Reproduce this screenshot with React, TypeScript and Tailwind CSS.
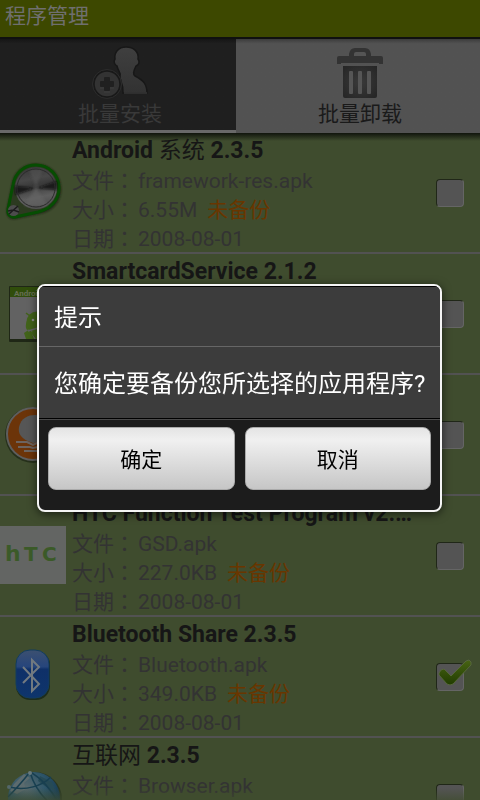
import { useState } from "react";
import type { ReactNode } from "react";

type AppItem = {
  id: string;
  name: string;
  version: string;
  cjk?: string;
  file: string;
  size: string;
  date: string;
  icon: ReactNode;
};

const SystemIcon = () => (
  <svg viewBox="0 0 66 66" className="size-full">
    <defs>
      <linearGradient id="metal" x1="0" y1="0" x2="0.2" y2="1">
        <stop offset="0" stopColor="#333333" />
        <stop offset="0.35" stopColor="#484848" />
        <stop offset="0.5" stopColor="#3a3a3a" />
        <stop offset="0.8" stopColor="#5e5e5e" />
        <stop offset="1" stopColor="#505050" />
      </linearGradient>
      <filter id="soft" x="-20%" y="-20%" width="140%" height="140%">
        <feGaussianBlur stdDeviation="1.2" />
      </filter>
    </defs>
    <path
      d="M12 26C14 12 24 5 36 5C50 5 61 16 61 30C61 44 51 53 38 55L15 60C9 61 6 55 7 50Z"
      fill="#1b2412"
      filter="url(#soft)"
    />
    <path
      d="M13 26C15 13 25 6 36 6C49 6 59 16 59 29C59 42 50 50 38 53L15 58C10 59 7 55 8 50Z"
      fill="#2c3a20"
      stroke="#064d02"
      strokeWidth="3"
    />
    <circle cx="36" cy="29" r="21" fill="url(#metal)" />
    <g filter="url(#soft)">
      <path d="M36 29L29 10H43Z" fill="#555555" opacity="0.5" />
      <path d="M36 29L24 47H48Z" fill="#666666" opacity="0.6" />
      <path d="M36 29L15 27V36Z" fill="#0d0d0d" opacity="0.8" />
      <path d="M36 29L57 22V31Z" fill="#0d0d0d" opacity="0.8" />
    </g>
    <circle cx="36" cy="29" r="19" fill="none" stroke="#2a2a2a" />
    <circle cx="13.500" cy="51.500" r="5.500" fill="#4c4c4c" />
    <path d="M8 52L13.500 51L18 47M9 55L13.500 51L19 53" stroke="#1c1c1c" strokeWidth="1.500" fill="none" />
  </svg>
);

const PackageIcon = () => (
  <svg viewBox="0 0 66 66" className="size-full">
    <rect x="9" y="6" width="51" height="56" rx="1" fill="#1f2716" />
    <rect x="10" y="7" width="48" height="52" fill="#626262" />
    <rect x="10" y="7" width="48" height="10" fill="#304d0b" />
    <text x="14" y="16" fontSize="8" fontWeight="bold" fontFamily="Roboto, sans-serif" fill="#666f55">
      Android
    </text>
    <g fill="#42631a">
      <path d="M26 48A12 12 0 0 1 50 44L27 50Z" />
      <circle cx="37" cy="42" r="10.500" />
      <path d="M24 53L30 49L34 59H26Z" />
      <path d="M30 52L48 47L52 59H36Z" />
    </g>
    <path d="M26 33L30 36" stroke="#42631a" strokeWidth="1.500" />
    <circle cx="33" cy="40" r="1.300" fill="#888888" />
    <path d="M28 51L48 45" stroke="#626262" strokeWidth="1.500" />
  </svg>
);

const BalloonIcon = () => (
  <svg viewBox="0 0 66 66" className="size-full">
    <circle cx="33" cy="34" r="28" fill="#26301b" />
    <circle cx="33" cy="33" r="26" fill="#6c3409" stroke="#5e5e5e" strokeWidth="2" />
    <path d="M33 42C20 38 18 32 19 26C21 17 28 14 35 14C44 14 49 20 49 27C49 35 42 40 34 42Z" fill="#565656" />
    <path
      d="M16 41H27L33 44L39 41H50M18 46H30L33 47L38 46H48M24 50H42"
      fill="none"
      stroke="#6c6460"
      strokeWidth="2"
    />
  </svg>
);

const HtcIcon = () => (
  <svg viewBox="0 0 66 66" className="size-full">
    <rect x="0" y="4" width="66" height="58" fill="#636563" />
    <g fontFamily="'DejaVu Sans', sans-serif" fontWeight="bold" fill="#3b5a28">
      <text x="5" y="39" fontSize="22">h</text>
      <text x="24" y="39" fontSize="20">T</text>
      <text x="42" y="39" fontSize="20">C</text>
    </g>
  </svg>
);

const BluetoothIcon = () => (
  <svg viewBox="0 0 66 66" className="size-full">
    <defs>
      <linearGradient id="bt" x1="0" y1="0" x2="0" y2="1">
        <stop offset="0" stopColor="#3c5070" />
        <stop offset="0.35" stopColor="#26457c" />
        <stop offset="0.4" stopColor="#0f3068" />
        <stop offset="1" stopColor="#0e356c" />
      </linearGradient>
    </defs>
    <rect x="16" y="8" width="34" height="49" rx="14" fill="#1e2d1d" />
    <rect x="16" y="7" width="33" height="48" rx="14" fill="url(#bt)" stroke="#123d5f" />
    <path d="M23 24L39 41L32 48V17L39 24L23 40" fill="none" stroke="#727a80" strokeWidth="2" />
  </svg>
);

const GlobeIcon = () => (
  <svg viewBox="0 0 66 66" className="size-full">
    <defs>
      <radialGradient id="globe" cx="0.35" cy="0.3" r="0.7">
        <stop offset="0" stopColor="#59696c" />
        <stop offset="0.5" stopColor="#30576a" />
        <stop offset="1" stopColor="#143851" />
      </radialGradient>
    </defs>
    <circle cx="35" cy="35" r="27" fill="#2b3822" />
    <circle cx="34" cy="34" r="26" fill="url(#globe)" />
    <path d="M14 20L24 10L30 14L24 19L26 25L17 30L10 27Z" fill="#5c6b6e" />
    <path d="M40 12L52 18L55 27L45 22L38 17Z" fill="#264a55" />
    <path
      d="M30 8C22 18 15 26 8 33M30 8C40 13 52 26 59 40M9 23C26 27 42 22 51 13M30 8C34 22 42 34 56 44"
      fill="none"
      stroke="#183f50"
      strokeWidth="1.500"
    />
    <circle cx="30" cy="9" r="2" fill="#68797c" />
    <circle cx="9" cy="23" r="2" fill="#53676a" />
  </svg>
);

const InstallIcon = () => (
  <svg viewBox="0 0 60 54" className="h-[54px] w-[60px]">
    <defs>
      <linearGradient id="person" x1="0" y1="0" x2="0" y2="1">
        <stop offset="0" stopColor="#3f3f3f" />
        <stop offset="1" stopColor="#323232" />
      </linearGradient>
    </defs>
    <path
      d="M36 2C28 2 24 8 25 14C23 17 25 20 27 21C28 26 31 27 30 31C29 35 34 39 33 48H57C57 39 53 35 45 31C43 30 43 27 46 21C49 20 50 17 48 14C49 7 44 2 36 2Z"
      fill="url(#person)"
      stroke="#171717"
      strokeWidth="1.500"
    />
    <path d="M34 48H57" stroke="#444444" />
    <circle cx="17" cy="39" r="15" fill="#1f1f1f" />
    <circle cx="17" cy="39" r="13" fill="#333333" stroke="#191919" strokeWidth="1.500" />
    <circle cx="17" cy="39" r="14.500" fill="none" stroke="#2c2c2c" />
    <path
      d="M15 32H19Q20 32 20 33V36H23Q24 36 24 37V41Q24 42 23 42H20V45Q20 46 19 46H15Q14 46 14 45V42H11Q10 42 10 41V37Q10 36 11 36H14V33Q14 32 15 32Z"
      fill="#202020"
    />
    <path d="M10 43H14M14 47H20M20 43H24" stroke="#3e3e3e" />
  </svg>
);

const TrashIcon = () => (
  <svg viewBox="0 0 60 54" className="h-[54px] w-[60px]">
    <defs>
      <radialGradient id="bin" cx="0.5" cy="0.5" r="0.7">
        <stop offset="0" stopColor="#3a3a3a" />
        <stop offset="1" stopColor="#252525" />
      </radialGradient>
    </defs>
    <path
      d="M7 19V13Q7 11 9 11H19V9Q20 3 25 3H35Q40 3 41 9V11H51Q53 11 53 13V19H49V18H11V19Z"
      fill="#333333"
    />
    <path d="M24 11V9Q24 7 26 7H34Q36 7 36 9V11Z" fill="#555555" />
    <path d="M13 21H47V51Q47 53 45 53H15Q13 53 13 51Z" fill="url(#bin)" />
    <g fill="#565656">
      <rect x="19" y="26" width="4" height="23" rx="1" />
      <rect x="28" y="26" width="4" height="23" rx="1" />
      <rect x="37" y="26" width="4" height="23" rx="1" />
    </g>
  </svg>
);

const CheckMark = () => (
  <svg
    viewBox="0 0 36 30"
    className="pointer-events-none absolute -top-1 left-0.5 h-[30px] w-9"
  >
    <defs>
      <linearGradient id="tick" x1="0" y1="0" x2="0" y2="1">
        <stop offset="0" stopColor="#486414" />
        <stop offset="1" stopColor="#213c00" />
      </linearGradient>
    </defs>
    <path
      d="M1 14L3 11L6 10L13 17L28 2L31 1L33 3V6L15 25L12 26L9 25L1 16Z"
      fill="url(#tick)"
      stroke="#56663c"
    />
  </svg>
);

type FieldProps = {
  label: string;
  children: ReactNode;
};

const Field = ({ label, children }: FieldProps) => (
  <p className="h-[29px] leading-[29px]">
    {label}
    <span
      className="mr-[3px] font-['Noto_Sans_CJK_TC',sans-serif] leading-none"
      lang="zh-TW"
    >
      ：
    </span>
    {children}
  </p>
);

const apps: AppItem[] = [
  { id: "framework", name: "Android", cjk: "系统", version: "2.3.5", file: "framework-res.apk", size: "6.55M", date: "2008-08-01", icon: <SystemIcon /> },
  { id: "smartcard", name: "SmartcardService", version: "2.1.2", file: "", size: "", date: "", icon: <PackageIcon /> },
  { id: "balloon", name: "", version: "", file: "", size: "", date: "", icon: <BalloonIcon /> },
  { id: "htc", name: "HTC Function Test Program", version: "v2.3.5", file: "GSD.apk", size: "227.0KB", date: "2008-08-01", icon: <HtcIcon /> },
  { id: "bluetooth", name: "Bluetooth Share", version: "2.3.5", file: "Bluetooth.apk", size: "349.0KB", date: "2008-08-01", icon: <BluetoothIcon /> },
  { id: "browser", name: "", cjk: "互联网", version: "2.3.5", file: "Browser.apk", size: "", date: "", icon: <GlobeIcon /> },
];

const App = () => {
  const [selected, setSelected] = useState<string[]>(["bluetooth"]);
  const [showDialog, setShowDialog] = useState(true);

  function toggle(id: string) {
    setSelected((prev) =>
      prev.includes(id) ? prev.filter((item) => item !== id) : [...prev, id]
    );
  }

  return (
    <div className="flex h-screen flex-col overflow-hidden bg-[#3f4c2e] font-[Roboto,'Noto_Sans_CJK_SC',sans-serif] text-[21px]">
      <header className="h-[37px] shrink-0 bg-[#3d4800] px-[5px]">
        <h1 className="leading-8 text-[#6f6f6f]">程序管理</h1>
      </header>

      <nav className="grid h-24 shrink-0 grid-cols-[59fr_61fr] border-t-2 border-[#101010] bg-[#525252]">
        <button className="flex flex-col items-center border-b-3 border-[#696969] bg-[#1f1f1f] bg-linear-to-b from-[#151515] from-0% to-[#1f1f1f] to-5% pt-[6px] pl-1 text-[#393939]">
          <InstallIcon />
          <span className="leading-[30px]">批量安装</span>
        </button>
        <button className="flex flex-col items-center bg-linear-to-b from-[#3c3c3c] from-0% to-[#525252] to-5% pt-[6px] pl-1 text-[#1a1a1a]">
          <TrashIcon />
          <span className="leading-[30px]">批量卸载</span>
        </button>
      </nav>

      <main className="relative flex-1 overflow-hidden">
        <ul>
          {apps.map((item) => (
            <li
              key={item.id}
              className="flex h-[121px] items-center border-b-2 border-[#525252] pr-4"
            >
              <div className="mb-px size-[66px] shrink-0">{item.icon}</div>
              <div className="ml-1.5 h-full min-w-0 flex-1 pt-0.5 text-[#333333]">
                <h2 className="mr-5 h-8 truncate text-[23px] leading-8 font-bold text-[#161616]">
                  {item.name}{" "}
                  {item.cjk && <span className="font-normal">{item.cjk} </span>}
                  {item.version}
                </h2>
                {item.file && <Field label="文件">{item.file}</Field>}
                {item.size && (
                  <Field label="大小">
                    {item.size}
                    <span className="ml-2.5 text-[#693600]">未备份</span>
                  </Field>
                )}
                {item.date && <Field label="日期">{item.date}</Field>}
              </div>
              <div className="relative size-7 shrink-0">
                <input
                  type="checkbox"
                  aria-label={item.name || item.cjk || item.id}
                  checked={selected.includes(item.id)}
                  onChange={() => toggle(item.id)}
                  className="block size-7 appearance-none rounded-sm border border-t-[#202718] border-r-[#656565] border-b-[#656565] border-l-[#202718] bg-[#545454]"
                />
                {selected.includes(item.id) && <CheckMark />}
              </div>
            </li>
          ))}
        </ul>
        <div className="pointer-events-none absolute inset-x-0 top-0 h-2 bg-linear-to-b from-[#10140c] to-transparent" />
        <div className="pointer-events-none absolute inset-x-0 bottom-0 h-3 bg-linear-to-t from-[#3f4c2e]/70 to-transparent" />
      </main>

      {showDialog && (
        <div className="fixed inset-0 flex items-center justify-center pr-[38px] pb-1 pl-[37px]">
          <div
            role="dialog"
            aria-labelledby="dialog-title"
            className="w-full overflow-hidden rounded-lg border-2 border-[#f4f4f4] bg-[#1c1c1c] text-2xl text-white shadow-[0_2px_10px_rgba(0,0,0,0.6)]"
          >
            <h2
              id="dialog-title"
              className="border-t border-b border-t-black border-b-[#666666] bg-[#3c3c3c] px-[15px] pt-1 leading-[55px]"
            >
              提示
            </h2>
            <p className="border-b border-black bg-[#3c3c3c] px-[15px] pt-1 leading-[67px] whitespace-nowrap">
              您确定要备份您所选择的应用程序?
            </p>
            <div className="flex gap-2.5 border-t border-[#4a4a4a] px-[9px] pt-[7px] pb-5 text-[21px] text-black">
              <button
                onClick={() => setShowDialog(false)}
                className="h-[63px] flex-1 rounded-lg border border-[#aaaaaa] bg-linear-to-b from-[#e4e4e4] via-[#f0f0f0] via-20% to-[#c6c6c6] pt-0.5"
              >
                确定
              </button>
              <button
                onClick={() => setShowDialog(false)}
                className="h-[63px] flex-1 rounded-lg border border-[#aaaaaa] bg-linear-to-b from-[#e4e4e4] via-[#f0f0f0] via-20% to-[#c6c6c6] pt-0.5"
              >
                取消
              </button>
            </div>
          </div>
        </div>
      )}
    </div>
  );
};

export default App;
